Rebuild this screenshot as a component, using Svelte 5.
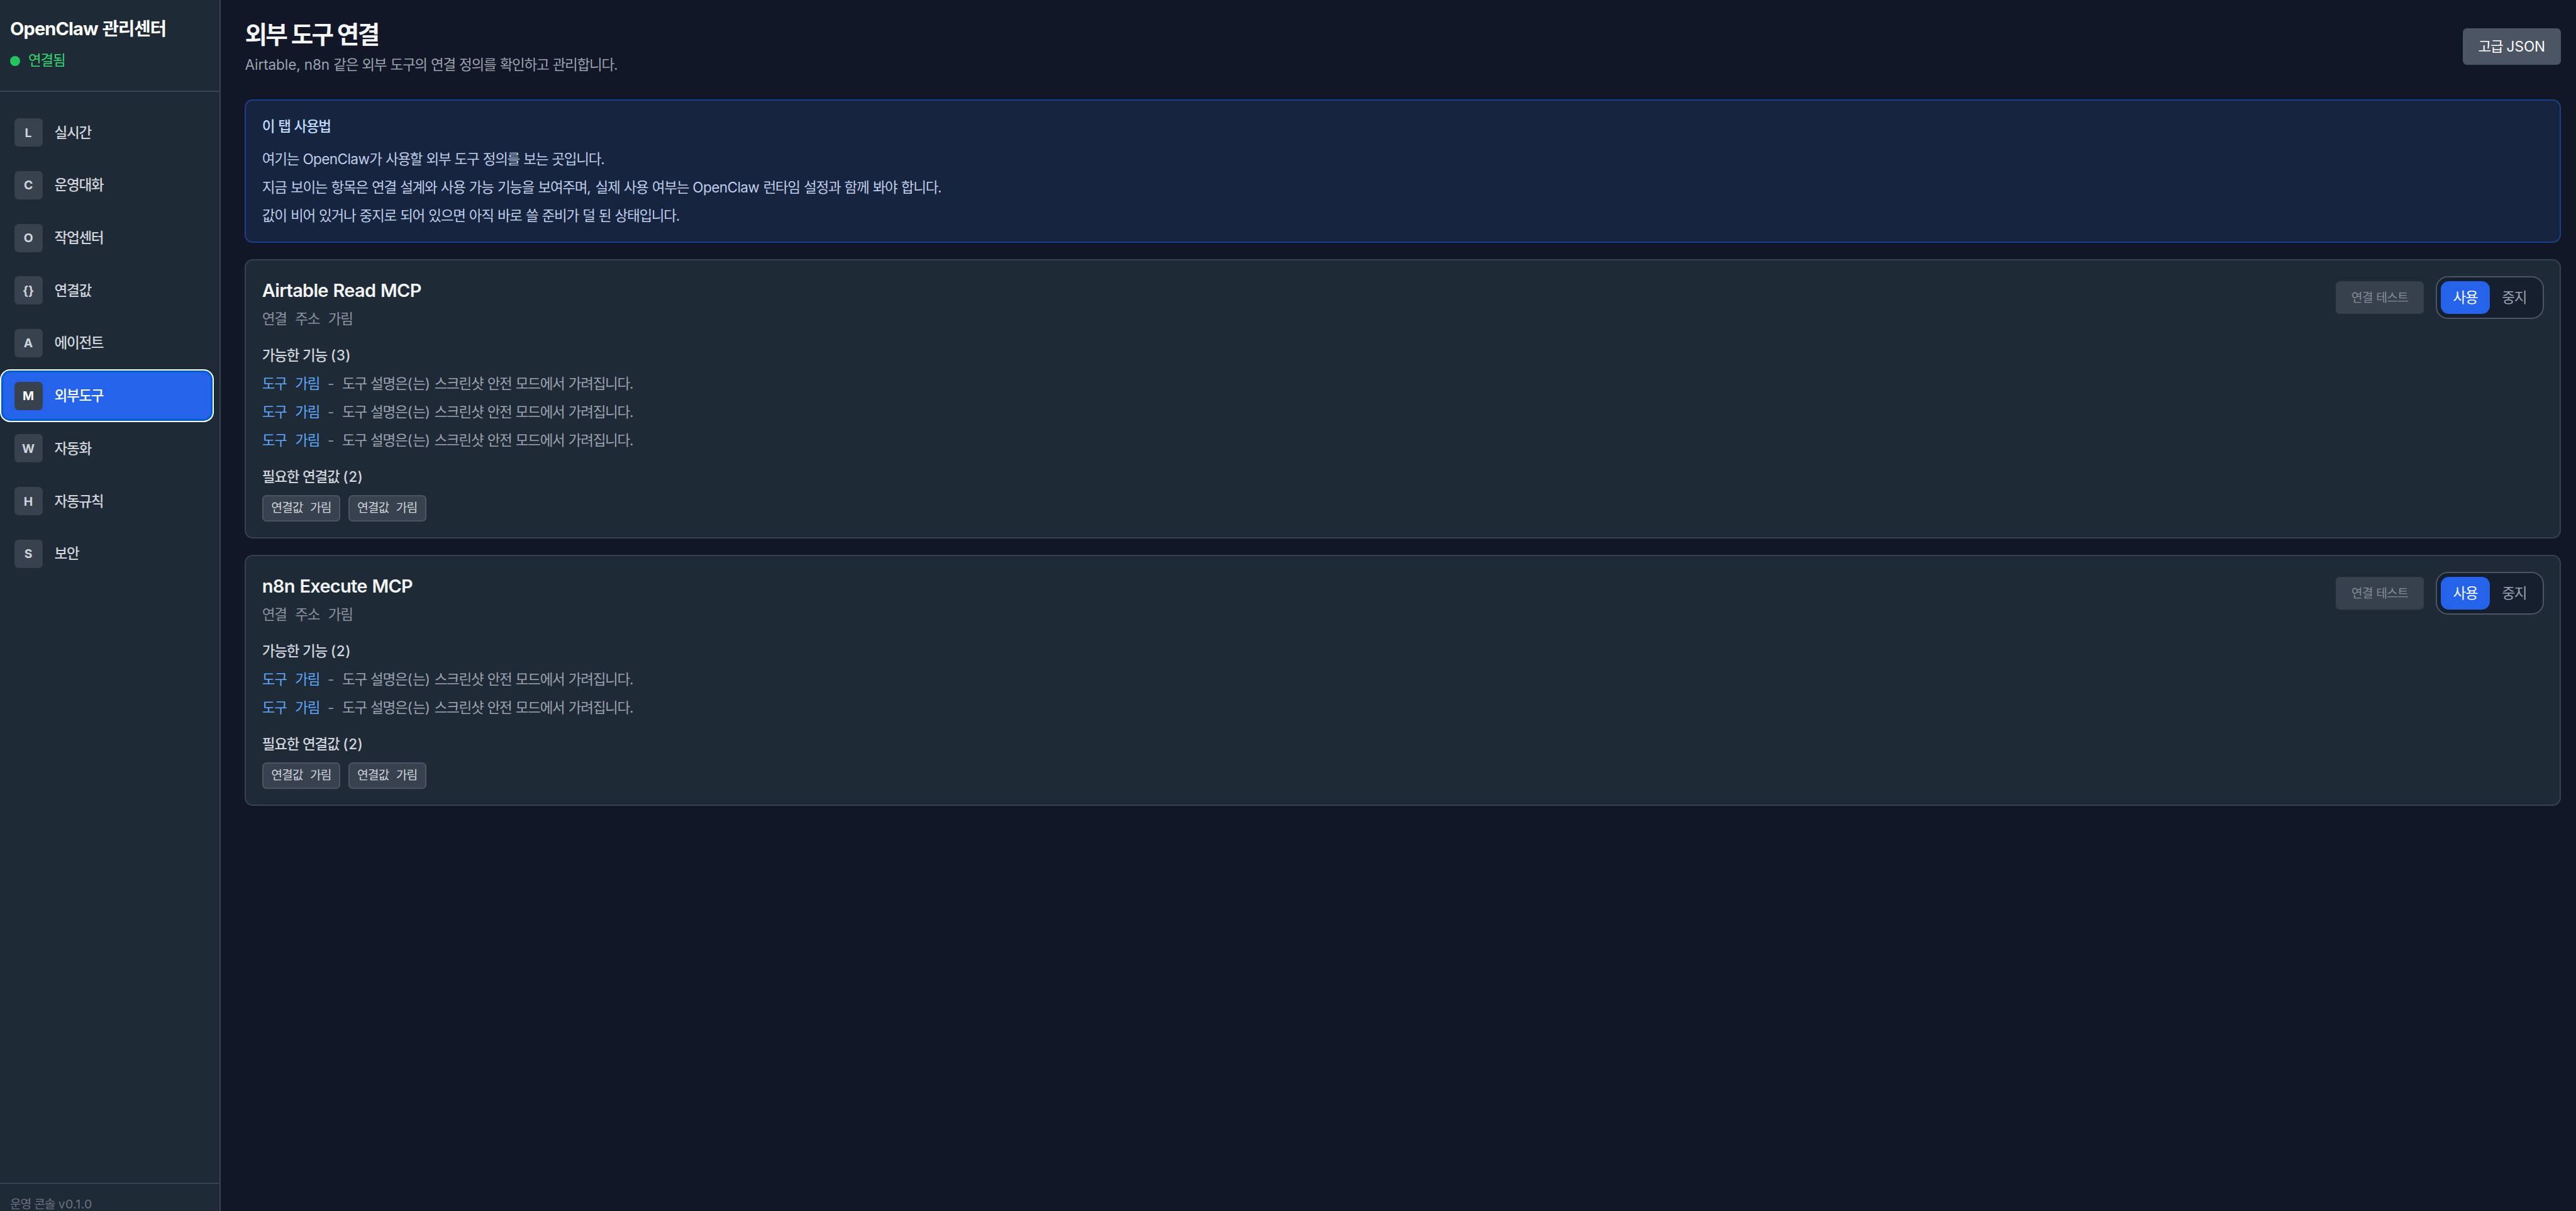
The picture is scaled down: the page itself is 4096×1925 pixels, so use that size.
<script>
  const menu = [
    { icon: 'L', label: '실시간' },
    { icon: 'C', label: '운영대화' },
    { icon: 'O', label: '작업센터' },
    { icon: '{}', label: '연결값' },
    { icon: 'A', label: '에이전트' },
    { icon: 'M', label: '외부도구', active: true },
    { icon: 'W', label: '자동화' },
    { icon: 'H', label: '자동규칙' },
    { icon: 'S', label: '보안' }
  ];

  const guide = [
    '여기는 OpenClaw가 사용할 외부 도구 정의를 보는 곳입니다.',
    '지금 보이는 항목은 연결 설계와 사용 가능 기능을 보여주며, 실제 사용 여부는 OpenClaw 런타임 설정과 함께 봐야 합니다.',
    '값이 비어 있거나 중지로 되어 있으면 아직 바로 쓸 준비가 덜 된 상태입니다.'
  ];

  const tool = { name: '도구 가림', description: '도구 설명은(는) 스크린샷 안전 모드에서 가려집니다.' };

  const servers = [
    { name: 'Airtable Read MCP', address: '연결 주소 가림', tools: [tool, tool, tool], keys: ['연결값 가림', '연결값 가림'] },
    { name: 'n8n Execute MCP', address: '연결 주소 가림', tools: [tool, tool], keys: ['연결값 가림', '연결값 가림'] }
  ];

  // Hangul is tracked tighter than Latin, so a line is split into runs of each.
  const runs = (text) => text.split(/([A-Za-z0-9(){}.,]+)/).filter(Boolean);
  const isLatin = (run) => /^[A-Za-z0-9(){}.,]/.test(run);
  const hasLetters = (run) => /[A-Za-z]/.test(run);
</script>

{#snippet mixed(text)}{#each runs(text) as run}{#if isLatin(run)}<span class={hasLetters(run) ? 'latin' : 'marks'}>{run}</span>{:else}{run}{/if}{/each}{/snippet}

<div class="app">
  <aside class="sidebar">
    <header class="brand">
      <h1>{@render mixed('OpenClaw 관리센터')}</h1>
      <p class="status"><span class="dot"></span>연결됨</p>
    </header>
    <nav>
      {#each menu as item}
        <button class="nav-item" class:active={item.active}>
          <span class="nav-icon">{item.icon}</span>
          <span class="nav-label">{item.label}</span>
        </button>
      {/each}
    </nav>
    <footer>{@render mixed('운영 콘솔 v0.1.0')}</footer>
  </aside>

  <main>
    <header class="page-head">
      <div>
        <h2>외부 도구 연결</h2>
        <p>{@render mixed('Airtable, n8n 같은 외부 도구의 연결 정의를 확인하고 관리합니다.')}</p>
      </div>
      <button class="json">{@render mixed('고급 JSON')}</button>
    </header>

    <section class="guide">
      <h3>이 탭 사용법</h3>
      {#each guide as line}
        <p>{@render mixed(line)}</p>
      {/each}
    </section>

    {#each servers as server}
      <article class="card">
        <div class="card-head">
          <div>
            <h3><span class="latin">{server.name}</span></h3>
            <p class="address">{server.address}</p>
          </div>
          <div class="actions">
            <button class="test" disabled>연결 테스트</button>
            <div class="toggle">
              <button class="on">사용</button>
              <button>중지</button>
            </div>
          </div>
        </div>

        <h4>{@render mixed(`가능한 기능 (${server.tools.length})`)}</h4>
        <ul class="tools">
          {#each server.tools as entry}
            <li><code>{entry.name}</code><span class="dash">-</span><span>{@render mixed(entry.description)}</span></li>
          {/each}
        </ul>

        <h4>{@render mixed(`필요한 연결값 (${server.keys.length})`)}</h4>
        <div class="chips">
          {#each server.keys as key}
            <span class="chip">{key}</span>
          {/each}
        </div>
      </article>
    {/each}
  </main>
</div>

<style>
  :global(html) {
    font-size: 25.751px;
  }
  :global(body) {
    margin: 0;
    background: #111726;
  }
  h1, h2, h3, h4, p, ul {
    margin: 0;
    padding: 0;
    list-style: none;
  }
  button {
    font: inherit;
    letter-spacing: inherit;
    word-spacing: inherit;
    border: 0;
    margin: 0;
    padding: 0;
    background: none;
    color: inherit;
  }
  .app {
    display: flex;
    height: 100vh;
    overflow: hidden;
    font-family: Inter, 'Noto Sans CJK KR', sans-serif;
    font-size: 0.875rem;
    line-height: 1.25rem;
    letter-spacing: -0.056em;
    word-spacing: 0.05em;
    white-space: nowrap;
    color: #d1d5db;
    background: #111726;
  }
  .latin {
    letter-spacing: -0.025em;
  }
  .marks {
    letter-spacing: 0.025em;
  }

  .sidebar {
    box-sizing: border-box;
    flex: none;
    display: flex;
    flex-direction: column;
    width: 13.625rem;
    background: #1f2a37;
    border-right: 2px solid #374151;
  }
  .brand {
    box-sizing: border-box;
    height: 5.6875rem;
    padding: 0.875rem 0.625rem 0;
    border-bottom: 2px solid #374151;
  }
  h1 {
    font-size: 1.125rem;
    line-height: 1.75rem;
    font-weight: 700;
    color: #fff;
  }
  h1 .latin {
    letter-spacing: -0.03em;
  }
  .status {
    display: flex;
    align-items: center;
    gap: 0.5rem;
    margin-top: 0.5rem;
    color: #35d870;
  }
  .dot {
    width: 0.625rem;
    height: 0.625rem;
    border-radius: 50%;
    background: #22c55e;
  }
  nav {
    flex: 1;
    padding-top: 0.875rem;
  }
  .nav-item {
    box-sizing: border-box;
    display: flex;
    align-items: center;
    gap: 0.734375rem;
    width: 13.1875rem;
    height: 3.25rem;
    padding-left: 0.875rem;
    border-radius: 0.625rem;
  }
  .nav-item.active {
    padding-left: calc(0.875rem - 2px);
    border: 2px solid #fff;
    background: #2563eb;
    box-shadow: inset 0 0 0 3px #005fd0;
    color: #fff;
  }
  .nav-icon {
    display: grid;
    place-items: center;
    width: 1.75rem;
    height: 1.75rem;
    border-radius: 0.25rem;
    background: #38424f;
    font-size: 0.75rem;
    font-weight: 700;
    letter-spacing: 0;
  }
  .nav-label {
    font-weight: 500;
  }
  footer {
    box-sizing: border-box;
    flex: none;
    height: 1.75rem;
    padding: 0.75rem 0.625rem 0;
    border-top: 2px solid #374151;
    font-size: 0.75rem;
    line-height: 1.0625rem;
    color: #6b7280;
  }
  footer .latin {
    letter-spacing: 0.02em;
  }

  main {
    flex: 1;
    min-width: 0;
    padding: 1.125rem 0.9375rem 0 1.5rem;
  }
  .page-head {
    display: flex;
    align-items: center;
    justify-content: space-between;
    height: 3.5rem;
    margin-bottom: 1.5rem;
  }
  h2 {
    padding-top: 0.0625rem;
    font-size: 1.5rem;
    line-height: 1.9375rem;
    letter-spacing: -0.07em;
    font-weight: 700;
    color: #f3f4f6;
  }
  .page-head p {
    margin-top: 0.25rem;
    color: #9ca3af;
  }
  .page-head p .latin {
    letter-spacing: -0.004em;
  }
  .json {
    width: 6.0625rem;
    height: 2.25rem;
    border-radius: 0.25rem;
    background: #4b5563;
    color: #fff;
  }
  .json .latin {
    letter-spacing: 0;
  }

  .guide,
  .card {
    padding: calc(1.0625rem - 2px);
    border: 2px solid #374151;
    border-radius: 0.5rem;
    margin-bottom: 1rem;
  }
  .guide {
    border-color: #1e408a;
    background: #17243f;
    color: #bfcdea;
  }
  .guide h3 {
    margin-bottom: 0.75rem;
    font-size: 0.875rem;
    line-height: 1.25rem;
    font-weight: 500;
    color: #bfdbfe;
  }
  .guide p + p {
    margin-top: 0.5rem;
  }

  .card {
    background: #1f2a37;
  }
  .card-head {
    display: flex;
    justify-content: space-between;
    align-items: flex-start;
    height: 3.25rem;
  }
  .card h3 {
    font-size: 1.125rem;
    line-height: 1.75rem;
    font-weight: 600;
    color: #f3f4f6;
  }
  .card h3 .latin {
    letter-spacing: -0.024em;
  }
  .address {
    margin-top: 0.25rem;
    word-spacing: 0.375em;
    color: #8b929e;
  }
  .actions {
    display: flex;
    align-items: center;
    gap: 0.75rem;
  }
  .test {
    width: 5.4375rem;
    height: 2rem;
    border-radius: 0.25rem;
    background: #37414e;
    color: #848b96;
    font-size: 0.75rem;
    letter-spacing: -0.045em;
  }
  .toggle {
    display: flex;
    padding: calc(0.3125rem - 2px);
    border: 2px solid #4b5563;
    border-radius: 0.75rem;
    background: #151f2e;
    color: #9ca3af;
  }
  .toggle button {
    width: 3.015rem;
    height: 2rem;
    border-radius: 0.5rem;
  }
  .toggle .on {
    background: #2563eb;
    color: #fff;
  }

  h4 {
    margin-top: 1rem;
    font-size: 0.875rem;
    line-height: 1.25rem;
    font-weight: 500;
    color: #d1d5db;
  }
  .tools li {
    display: flex;
    margin-top: 0.5rem;
    color: #9ca3af;
  }
  code {
    font-family: inherit;
    font-size: 0.875rem;
    word-spacing: 0.375em;
    color: #60a5fa;
  }
  .dash {
    width: 1.390625rem;
    text-align: center;
    letter-spacing: 0;
    color: #8b929e;
  }
  .chips {
    display: flex;
    gap: 0.5rem;
    margin-top: 0.5rem;
  }
  .chip {
    box-sizing: border-box;
    width: 4.8125rem;
    height: 1.625rem;
    padding: 0 calc(0.5625rem - 2px);
    border: 2px solid #4b5563;
    border-radius: 0.25rem;
    background: #38424f;
    font-size: 0.75rem;
    line-height: calc(1.625rem - 4px);
    letter-spacing: -0.056em;
    word-spacing: 0.38em;
    color: #d1d5db;
  }
</style>
